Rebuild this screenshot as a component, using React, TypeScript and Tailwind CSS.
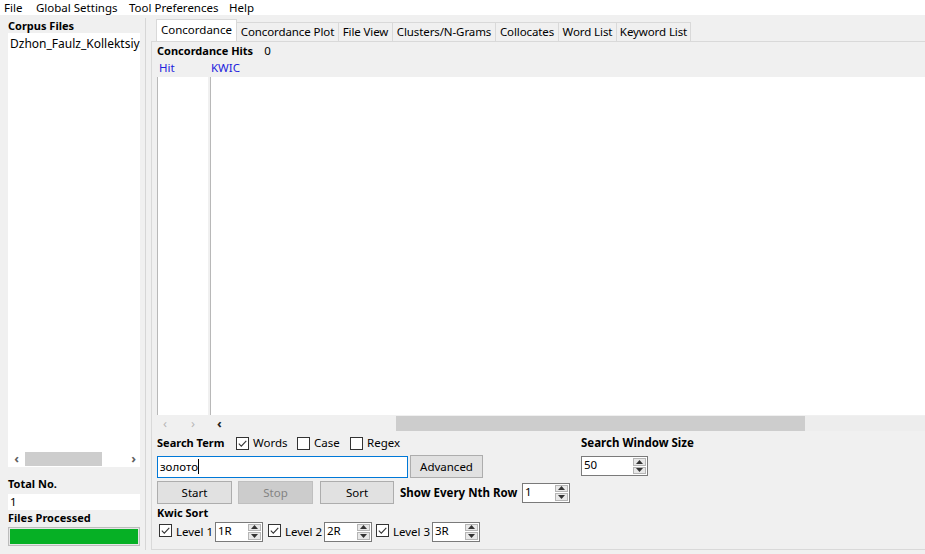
import React from 'react';

const font = "font-['Noto_Sans','Open_Sans',sans-serif]";

const Check: React.FC<{ checked?: boolean }> = ({ checked }) => (
  <span className="inline-flex shrink-0 w-[13px] h-[13px] border border-[#333] bg-white items-center justify-center">
    {checked && (
      <svg width="11" height="11" viewBox="0 0 11 11">
        <path d="M1.8 5.6 L4.3 8.1 L9.3 2.8" stroke="#333" strokeWidth="1.1" fill="none" />
      </svg>
    )}
  </span>
);

const Spin: React.FC<{ value: string; width: number }> = ({ value, width }) => (
  <div
    className="flex shrink-0 h-[20px] border border-[#7a7a7a] bg-white items-stretch"
    style={{ width }}
  >
    <div className="flex-1 pl-[2px] leading-[15px]">{value}</div>
    <div className="flex flex-col w-[14px] py-[1px] pr-[1px] gap-[1px]">
      <div className="flex-1 bg-[#e8e8e8] border border-[#b5b5b5] flex items-center justify-center">
        <svg width="7" height="4" viewBox="0 0 7 4">
          <path d="M0 4 L3.5 0 L7 4Z" fill="#333" />
        </svg>
      </div>
      <div className="flex-1 bg-[#e8e8e8] border border-[#b5b5b5] flex items-center justify-center">
        <svg width="7" height="4" viewBox="0 0 7 4">
          <path d="M0 0 L3.5 4 L7 0Z" fill="#333" />
        </svg>
      </div>
    </div>
  </div>
);

const Btn: React.FC<{ label: string; disabled?: boolean; w: number }> = ({ label, disabled, w }) => (
  <div
    className={
      disabled
        ? 'shrink-0 h-[23px] bg-[#cccccc] border border-[#bfbfbf] text-[#838383] flex items-center justify-center'
        : 'shrink-0 h-[23px] bg-[#e1e1e1] border border-[#adadad] text-black flex items-center justify-center'
    }
    style={{ width: w }}
  >
    {label}
  </div>
);

const tabs: [string, number][] = [
  ['Concordance', 81],
  ['Concordance Plot', 102],
  ['File View', 54],
  ['Clusters/N-Grams', 103],
  ['Collocates', 63],
  ['Word List', 58],
  ['Keyword List', 74],
];

export default function App() {
  return (
    <div className={`w-[925px] h-[554px] bg-[#f0f0f0] overflow-hidden flex flex-col text-[11.5px] text-black ${font}`}>
      {/* menu */}
      <div className="h-[15px] bg-white flex items-center pl-[4px] leading-[14px] whitespace-nowrap">
        <span className="w-[32px]">File</span>
        <span className="w-[93px]">Global Settings</span>
        <span className="w-[100px]">Tool Preferences</span>
        <span>Help</span>
      </div>

      <div className="flex flex-1 min-h-0">
        {/* left panel */}
        <div className="w-[143px] shrink-0 flex flex-col pl-[8px] pr-[3px] pt-[3px] pb-[8px]">
          <div className="font-bold leading-[15px] h-[15px] text-[11px]">Corpus Files</div>
          <div className="flex-1 bg-white flex flex-col">
            <div className="flex-1 pl-[2px] pt-[3px] leading-[16px] text-[12px] whitespace-nowrap overflow-hidden">
              Dzhon_Faulz_Kollektsiya
            </div>
            <div className="h-[17px] flex items-center">
              <span className="w-[17px] text-center text-[#606060] text-[13px] font-bold">‹</span>
              <div className="w-[77px] h-[14px] bg-[#cdcdcd]"></div>
              <span className="flex-1 text-right pr-[4px] text-[#606060] text-[13px] font-bold">›</span>
            </div>
          </div>
          <div className="font-bold leading-[15px] h-[15px] mt-[9px] text-[11px]">Total No.</div>
          <div className="bg-white h-[16px] mt-[3px] pl-[2px] leading-[16px]">1</div>
          <div className="font-bold leading-[15px] h-[15px] text-[11px]">Files Processed</div>
          <div className="h-[19px] mt-[2px] border border-[#bcbcbc] bg-[#e6e6e6] p-[1px]">
            <div className="h-full bg-[#06b025]"></div>
          </div>
        </div>

        <div className="w-[1px] ml-[2px] bg-[#d6d6d6] mt-[3px] mb-[4px]"></div>

        {/* right notebook */}
        <div className="flex-1 flex flex-col pt-[4px] pl-[5px] pb-[4px] min-w-0">
          <div className="flex items-end h-[22px] pl-[5px]">
            {tabs.map(([t, w], i) =>
              i === 0 ? (
                <div
                  key={t}
                  className="h-[22px] bg-white border border-b-0 border-[#d9d9d9] text-center leading-[20px] shrink-0"
                  style={{ width: w }}
                >
                  {t}
                </div>
              ) : (
                <div
                  key={t}
                  className="h-[19px] bg-[#f0f0f0] border border-l-0 border-b-0 border-[#d9d9d9] text-center leading-[18px] shrink-0 whitespace-nowrap tracking-[-0.1px]"
                  style={{ width: w }}
                >
                  {t}
                </div>
              )
            )}
          </div>
          <div className="flex-1 flex flex-col border-t border-l border-b border-[#d9d9d9] pl-[5px] pb-[7px] min-h-0">
            <div className="flex gap-[11px] leading-[15px] h-[15px] mt-[1px]">
              <span className="font-bold text-[11px]">Concordance Hits</span>
              <span>0</span>
            </div>
            <div className="flex text-[#2222dd] leading-[15px] h-[15px] mt-[2px]">
              <span className="w-[54px] pl-[2px]">Hit</span>
              <span>KWIC</span>
            </div>
            <div className="flex flex-1 min-h-0 mt-[2px]">
              <div className="w-[51px] bg-white border-l border-[#b8b8b8]"></div>
              <div className="flex-1 bg-white border-l border-[#b8b8b8] ml-[2px]"></div>
            </div>
            <div className="h-[16px] flex items-center bg-[#f0f0f0]">
              <span className="w-[51px] flex gap-[24px] pl-[6px] text-[#b8b8b8] text-[13px] leading-[16px]">
                <span>‹</span>
                <span>›</span>
              </span>
              <span className="w-[10px] ml-[9px] text-[#222] text-[13px] font-bold leading-[16px]">‹</span>
              <div className="w-[169px]"></div>
              <div className="w-[409px] h-[15px] bg-[#cdcdcd]"></div>
              <div className="flex-1 h-[15px] bg-[#ededed]"></div>
            </div>

            <div className="flex mt-[4px]">
              <div className="flex flex-col w-[424px]">
                <div className="flex items-center h-[16px] whitespace-nowrap">
                  <span className="font-bold w-[79px] text-[11px]">Search Term</span>
                  <Check checked />
                  <span className="ml-[4px] w-[44px]">Words</span>
                  <Check />
                  <span className="ml-[4px] w-[36px]">Case</span>
                  <Check />
                  <span className="ml-[4px]">Regex</span>
                </div>
                <div className="flex items-center mt-[4px] gap-[2px]">
                  <div className="w-[251px] h-[22px] border border-[#0078d7] bg-white pl-[2px] flex items-center">
                    <span>золото</span>
                    <span className="w-[1px] h-[15px] bg-black"></span>
                  </div>
                  <Btn label="Advanced" w={73} />
                </div>
                <div className="flex items-center mt-[3px] whitespace-nowrap">
                  <Btn label="Start" w={75} />
                  <div className="ml-[6px]"><Btn label="Stop" disabled w={75} /></div>
                  <div className="ml-[7px]"><Btn label="Sort" w={74} /></div>
                  <span className="font-bold ml-[6px] w-[122px]">Show Every Nth Row</span>
                  <Spin value="1" width={48} />
                </div>
                <div className="font-bold leading-[14px] h-[14px] mt-[2px] text-[11px]">Kwic Sort</div>
                <div className="flex items-center mt-[1px] h-[21px] whitespace-nowrap">
                  <span className="ml-[2px]"><Check checked /></span>
                  <span className="ml-[4px] w-[39px]">Level 1</span>
                  <Spin value="1R" width={48} />
                  <span className="ml-[5px]"><Check checked /></span>
                  <span className="ml-[4px] w-[39px]">Level 2</span>
                  <Spin value="2R" width={48} />
                  <span className="ml-[4px]"><Check checked /></span>
                  <span className="ml-[4px] w-[39px]">Level 3</span>
                  <Spin value="3R" width={48} />
                </div>
              </div>
              <div className="flex flex-col">
                <div className="font-bold h-[16px] leading-[16px]">Search Window Size</div>
                <div className="mt-[5px]">
                  <Spin value="50" width={67} />
                </div>
              </div>
            </div>
          </div>
        </div>
      </div>
    </div>
  );
}
